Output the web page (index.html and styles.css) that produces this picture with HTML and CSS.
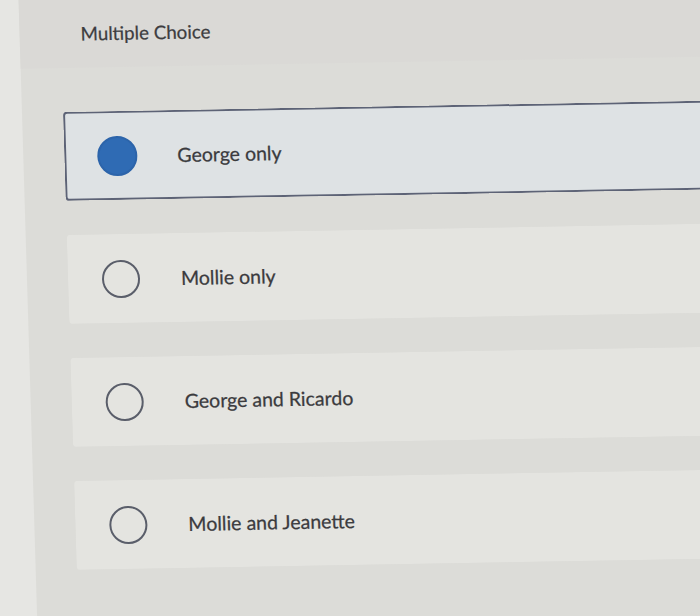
FILE: index.html
```html
<!DOCTYPE html>
<html lang="en">
<head>
<meta charset="utf-8">
<title>Multiple Choice</title>
<link rel="stylesheet" href="styles.css">
</head>
<body>
<div class="viewport">
  <div class="screen">
    <div class="rail"></div>
    <div class="main">
      <div class="header">
        <h1 class="title">Multiple Choice</h1>
      </div>
      <div class="options">
        <div class="option selected">
          <span class="radio"></span>
          <span class="label">George only</span>
        </div>
        <div class="option">
          <span class="radio"></span>
          <span class="label">Mollie only</span>
        </div>
        <div class="option">
          <span class="radio"></span>
          <span class="label">George and Ricardo</span>
        </div>
        <div class="option">
          <span class="radio"></span>
          <span class="label">Mollie and Jeanette</span>
        </div>
      </div>
    </div>
  </div>
</div>
</body>
</html>
```
FILE: styles.css
```css
html, body {
  margin: 0;
  padding: 0;
  background: #dfdfdb;
}

.viewport {
  width: 700px;
  height: 616px;
  overflow: hidden;
}

.screen {
  width: 740px;
  height: 680px;
  margin: -32px -20px;
  display: flex;
  background: #dcdcd8;
  transform: matrix(1, -0.0175, 0.03, 1, 0, 0);
  font-family: "Lato", "Open Sans", sans-serif;
  color: #3b3b3e;
}

.rail {
  width: 48px;
  flex: none;
  background: #e6e6e3;
}

.main {
  flex: 1;
  display: flex;
  flex-direction: column;
}

.header {
  height: 95px;
  box-sizing: border-box;
  padding: 50px 0 0 61px;
  background: #dad9d6;
}

.title {
  margin: 0;
  font-size: 18.7px;
  line-height: 22px;
  font-weight: 400;
  color: #3d3d40;
  -webkit-text-stroke: 0.25px #3d3d40;
}

.options {
  display: flex;
  flex-direction: column;
  gap: 34px;
  padding: 44px 0 0 41px;
}

.option {
  height: 89px;
  box-sizing: border-box;
  display: flex;
  align-items: center;
  gap: 41px;
  padding-left: 32px;
  border: 2px solid transparent;
  border-right: none;
  border-radius: 4px 0 0 4px;
  background: #e4e4e0;
}

.option.selected {
  background: #dee2e4;
  border-color: #5d6376;
}

.radio {
  width: 38px;
  height: 38px;
  box-sizing: border-box;
  border-radius: 50%;
  border: 2px solid #5a5e6a;
  flex: none;
}

.option.selected .radio {
  width: 40px;
  height: 40px;
  margin-left: -1px;
  margin-right: -1px;
  background: #2f6bb4;
  border-color: #2c64aa;
}

.label {
  font-size: 19.5px;
  line-height: 22px;
  color: #3b3b3e;
  -webkit-text-stroke: 0.25px #3b3b3e;
}
```
